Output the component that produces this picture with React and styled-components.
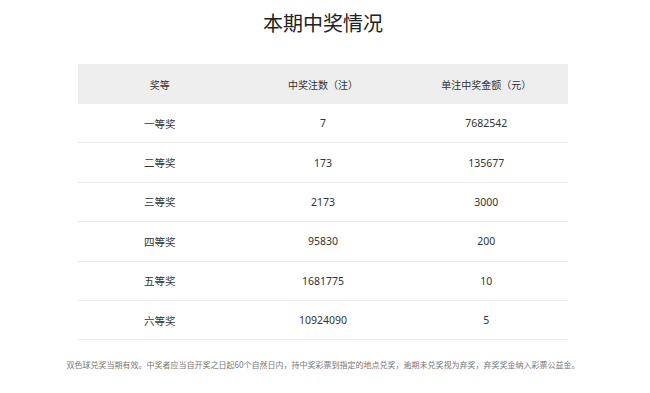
import styled, { createGlobalStyle } from 'styled-components';

const GlobalStyle = createGlobalStyle`
  body {
    margin: 0;
    background: #fff;
    font-family: "Noto Sans", "Noto Sans CJK SC", sans-serif;
    color: #333;
  }
`;

const Page = styled.div`
  width: 646px;
  display: flex;
  flex-direction: column;
  align-items: center;
`;

const Title = styled.h2`
  margin: 9px 0 0;
  height: 30px;
  line-height: 30px;
  font-size: 20px;
  font-weight: 400;
  color: #222;
`;

const Table = styled.div`
  margin-top: 25px;
  width: 490px;
  display: grid;
  grid-template-columns: repeat(3, 1fr);
`;

const Cell = styled.div`
  box-sizing: border-box;
  height: ${(p) => (p.$head ? '40px' : '39.4px')};
  display: flex;
  align-items: center;
  justify-content: center;
  font-size: ${(p) => (p.$head ? '10px' : '10.5px')};
  color: #333;
  background: ${(p) => (p.$head ? '#eee' : '#fff')};
  border-bottom: ${(p) => (p.$head ? 'none' : '1px solid #ececec')};
`;

const Note = styled.p`
  margin: 19px 0 0;
  font-size: 8px;
  color: #777;
`;

const rows = [
  ['一等奖', '7', '7682542'],
  ['二等奖', '173', '135677'],
  ['三等奖', '2173', '3000'],
  ['四等奖', '95830', '200'],
  ['五等奖', '1681775', '10'],
  ['六等奖', '10924090', '5'],
];

const App = () => (
  <Page>
    <GlobalStyle />
    <Title>本期中奖情况</Title>
    <Table>
      <Cell $head>奖等</Cell>
      <Cell $head>中奖注数（注）</Cell>
      <Cell $head>单注中奖金额（元）</Cell>
      {rows.map((r) => r.map((v, i) => <Cell key={r[0] + i}>{v}</Cell>))}
    </Table>
    <Note>
      双色球兑奖当期有效。中奖者应当自开奖之日起60个自然日内，持中奖彩票到指定的地点兑奖，逾期未兑奖视为弃奖，弃奖奖金纳入彩票公益金。
    </Note>
  </Page>
);

export default App;
